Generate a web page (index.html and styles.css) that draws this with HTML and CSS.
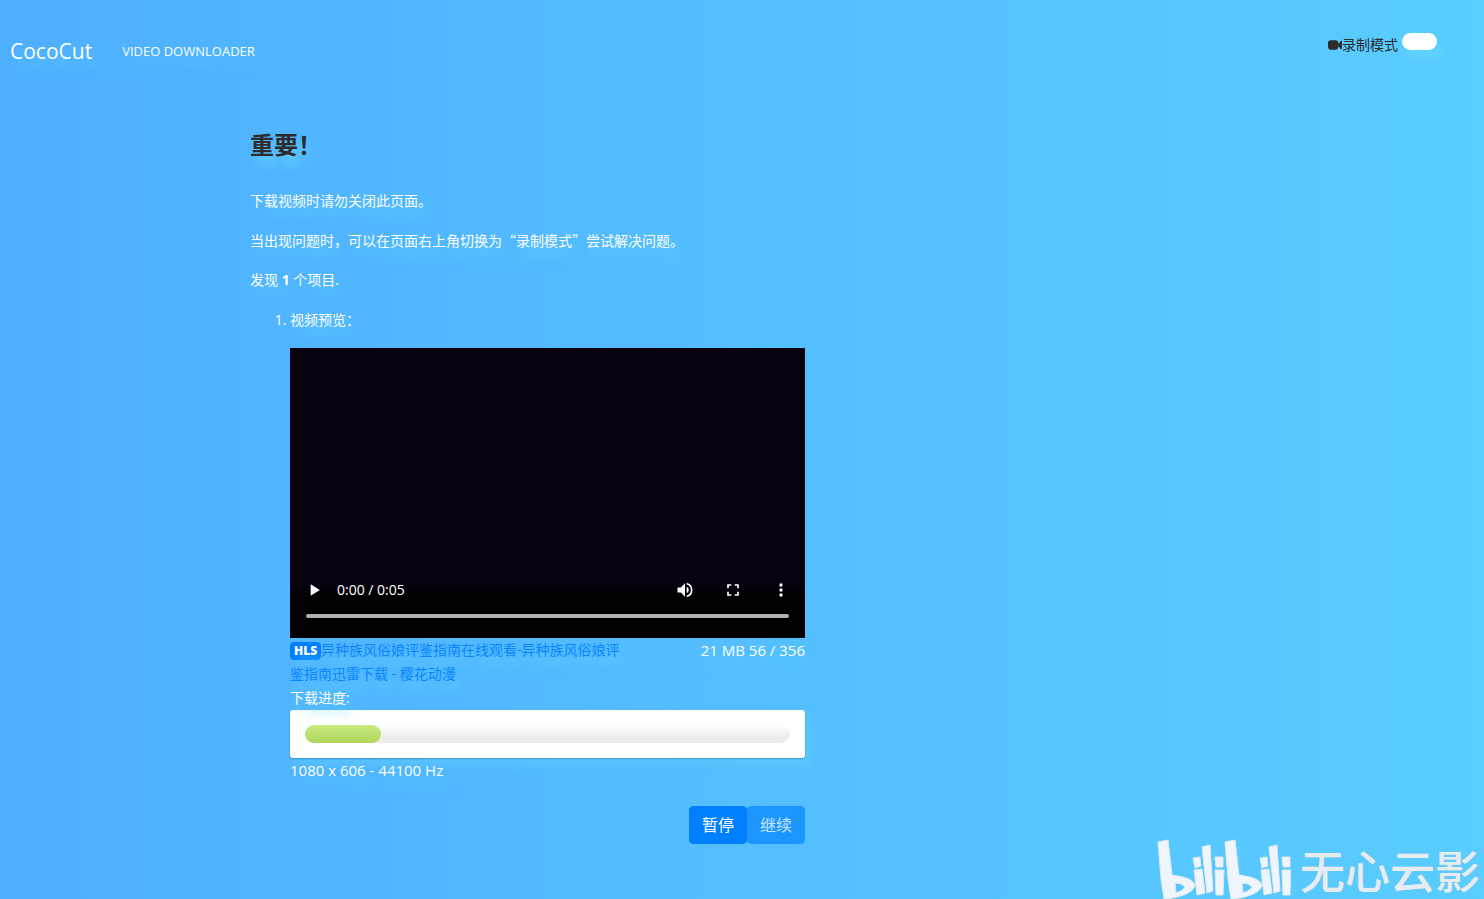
FILE: index.html
```html
<!DOCTYPE html>
<html lang="zh-CN">
<head>
<meta charset="utf-8">
<meta name="viewport" content="width=device-width, initial-scale=1">
<title>CocoCut</title>
<link rel="stylesheet" href="styles.css">
</head>
<body>
<header class="topbar">
  <a class="brand" href="#">CocoCut</a>
  <a class="nav-link" href="#">VIDEO DOWNLOADER</a>
  <div class="mode">
    <label class="mode-label" for="record">
      <svg class="camera" viewBox="0 0 15 10" aria-hidden="true"><rect width="11" height="10" rx="3"/><path d="M10 5 14 0.5Q15 0 15 1V9Q15 10 14 9.5Z"/></svg>录制模式</label>
    <input class="switch" type="checkbox" id="record">
  </div>
</header>
<main class="content">
  <h1 class="title">重要！</h1>
  <p class="note">下载视频时请勿关闭此页面。</p>
  <p class="note">当出现问题时，可以在页面右上角切换为“录制模式”尝试解决问题。</p>
  <p class="note found">发现 <b>1</b> 个项目.</p>
  <ol class="items">
    <li>
      <p class="preview">视频预览：</p>
      <div class="player">
        <div class="controls">
          <button class="control" type="button" aria-label="播放"><svg viewBox="0 0 24 24"><path d="M8 5v14l11-7z"/></svg></button>
          <span class="time">0:00 / 0:05</span>
          <button class="control" type="button" aria-label="音量"><svg viewBox="0 0 24 24"><path d="M3 9v6h4l5 5V4L7 9zm13.5 3A4.5 4.5 0 0 0 14 7.970v8.050A4.500 4.500 0 0 0 16.500 12zM14 3.230v2.060a7 7 0 0 1 0 13.420v2.060a9 9 0 0 0 0-17.540z"/></svg></button>
          <button class="control" type="button" aria-label="全屏"><svg viewBox="0 0 24 24"><path d="M7 14H5v5h5v-2H7zM5 10h2V7h3V5H5zm12 7h-3v2h5v-5h-2zM14 5v2h3v3h2V5z"/></svg></button>
          <button class="control" type="button" aria-label="更多"><svg viewBox="0 0 24 24"><circle cx="12" cy="6" r="2"/><circle cx="12" cy="12" r="2"/><circle cx="12" cy="18" r="2"/></svg></button>
        </div>
        <div class="timeline"></div>
      </div>
      <div class="info">
        <div class="name"><span class="badge">HLS</span><a href="#">异种族风俗娘评鉴指南在线观看-异种族风俗娘评鉴指南迅雷下载 - 樱花动漫</a></div>
        <div class="size">21 MB 56 / 356</div>
      </div>
      <div>下载进度:</div>
      <div class="meter"><div class="track"><div class="fill" style="width:15.700%"></div></div></div>
      <div class="spec">1080 x 606 - 44100 Hz</div>
      <div class="actions">
        <button class="btn" type="button">暂停</button>
        <button class="btn" type="button" disabled>继续</button>
      </div>
    </li>
  </ol>
</main>
<div class="watermark">
  <svg class="bili" viewBox="0 0 134 60" role="img" aria-label="bilibili">
    <defs>
      <g id="bili-half">
        <path d="M1 3 11 1 15 36Q38 39 38 47 34 57 9 60H7L4 40ZM18 44 19 54Q26 52 28 48Q25 44 18 44Z" fill-rule="evenodd"/>
        <path d="M37 31 45 30 48 54 40 56ZM45 8 53 6 56 52 50 54ZM58 31H67L66 56H59Z"/>
        <path d="M36 19 43 18 44 27 38 29ZM58 18H66V28H59Z"/>
      </g>
    </defs>
    <use href="#bili-half"/><use href="#bili-half" x="67"/>
  </svg>
  <span>无心云影</span>
</div>
</body>
</html>
```
FILE: styles.css
```css
* { box-sizing: border-box; }

body {
  position: relative;
  min-height: 100vh;
  margin: 0;
  overflow-x: hidden;
  background: linear-gradient(to right, #4fafff, #59cdff);
  color: #fff;
  font: 14px/24px "Open Sans", "Noto Sans CJK SC", sans-serif;
  text-shadow: 5px 10px 10px rgba(100, 215, 255, 0.6);
}

a { text-decoration: none; }

button { font-family: inherit; }

.topbar {
  display: flex;
  align-items: center;
  gap: 30px;
  height: 102px;
  padding: 0 47px 0 10px;
}

.brand {
  color: #fff;
  font-size: 21px;
}

.nav-link {
  color: #fff;
  font-size: 13px;
}

.mode {
  display: flex;
  align-items: flex-start;
  gap: 4px;
  margin: 0 0 14px auto;
}

.mode-label {
  display: flex;
  align-items: center;
  padding-top: 1px;
  color: #2c2c2c;
  text-shadow: none;
}

.camera {
  width: 14px;
  height: 10px;
  fill: #2c2c2c;
}

.switch {
  appearance: none;
  width: 35px;
  height: 17px;
  margin: 1px 0 0;
  border-radius: 9px;
  background: #fff;
  box-shadow: 5px 10px 10px rgba(100, 215, 255, 0.6);
}

.content {
  max-width: 984px;
  margin: 0 auto;
  padding-top: 25px;
}

.title {
  margin: 0 0 25px;
  color: #2c2c2c;
  font-size: 24px;
  line-height: 36px;
}

.note,
.preview { margin: 0 0 16px; }

.note { font-family: "Noto Sans CJK SC", sans-serif; }

.found { font-family: inherit; }

.items {
  max-width: 555px;
  margin: 0;
  padding-left: 40px;
}

.player {
  display: flex;
  flex-direction: column;
  justify-content: flex-end;
  aspect-ratio: 515 / 290;
  padding: 0 16px 20px;
  background: linear-gradient(#06000f 82%, #000 86%);
  text-shadow: none;
}

.controls {
  display: flex;
  align-items: center;
  gap: 28px;
  height: 48px;
  margin: 0 -2px;
}

.control {
  width: 20px;
  height: 20px;
  padding: 0;
  border: 0;
  background: none;
}

.control svg {
  display: block;
  width: 20px;
  height: 20px;
  fill: #fff;
}

.time {
  flex: 1;
  margin-left: -15px;
}

.timeline {
  height: 4px;
  border-radius: 2px;
  background: #b0b0b0;
}

.info {
  display: flex;
  justify-content: space-between;
}

.name { flex: 0 1 343px; }

.name a { color: #0a84ff; }

.badge {
  display: inline-block;
  padding: 3px 4px;
  border-radius: 4px;
  background: #0080ff;
  font-size: 12px;
  font-weight: 800;
  line-height: 12px;
}

.size,
.spec { font-size: 15px; }

.meter {
  padding: 15px;
  border-radius: 3px;
  background: #fff;
  box-shadow: 0 1px 2px rgba(0, 60, 120, 0.35), 5px 6px 10px rgba(100, 215, 255, 0.5);
}

.track {
  height: 18px;
  border-radius: 9px;
  background: linear-gradient(#fff, #ececec 70%);
}

.fill {
  height: 100%;
  border-radius: 9px;
  background: linear-gradient(#cbea82, #aed557);
}

.actions {
  display: flex;
  justify-content: flex-end;
  padding-top: 24px;
}

.btn {
  padding: 6px 12px;
  border: 1px solid #0080ff;
  border-radius: 4px;
  background: #0080ff;
  color: #fff;
  font-size: 16px;
  line-height: 24px;
}

.btn:disabled { opacity: 0.65; }

.watermark {
  position: absolute;
  right: 4px;
  bottom: 0;
  display: flex;
  align-items: flex-end;
  gap: 9px;
  color: #e4edf2;
  font-family: "Noto Sans CJK SC", sans-serif;
  font-size: 45px;
  font-weight: 500;
  line-height: 58px;
  text-shadow: 0 0 1px #a9b9c2;
}

.bili {
  width: 134px;
  height: 60px;
  fill: #eef5fc;
  stroke: #e3e9ee;
  stroke-width: 1;
}
```
